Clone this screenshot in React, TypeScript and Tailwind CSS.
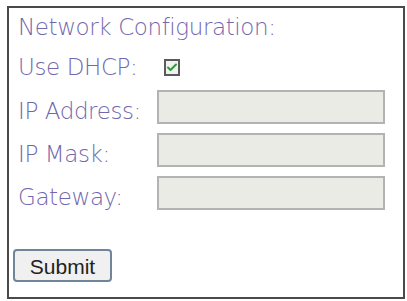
import { Check } from "lucide-react";

const FIELDS = ["IP Address:", "IP Mask:", "Gateway:"];

export default function App() {
  return (
    <div className="w-[407px] h-[301px] bg-white pt-[6px] pl-[7px] pr-[2px] pb-[2px]" style={{ fontFamily: '"DejaVu Sans", Verdana, sans-serif' }}>
      <div className="h-full border-2 border-[#4a4a4a] pl-[9px] pt-[5px] text-[#7267ae] text-[23px] font-light tracking-[-0.4px]">
        <div className="h-[28px] leading-[28px]">Network Configuration:</div>

        {/* DHCP */}
        <div className="flex items-center h-[36px] mt-[8px]">
          <span className="w-[146px] leading-[28px]">Use DHCP:</span>
          <span className="w-[16px] h-[17px] mt-[1px] border-2 border-[#5a5a5a] bg-[#eef3ee] flex items-center justify-center">
            <Check size={13} strokeWidth={4} className="text-[#2f9a3a]" />
          </span>
        </div>

        {/* address fields */}
        <div className="flex flex-col gap-[9px] mt-[5px]">
          {FIELDS.map((label) => (
            <div key={label} className="flex items-center h-[34px]">
              <span className="w-[139px] leading-[28px] mt-[8px]">{label}</span>
              <div className="w-[228px] h-[34px] border-2 border-[#b3b3b3] bg-[#ebebe6]" />
            </div>
          ))}
        </div>

        <button className="mt-[39px] -ml-[5px] w-[99px] h-[33px] border-2 border-[#70859a] rounded-[4px] bg-[#f0f0f0] text-[#222] text-[21px] tracking-normal" style={{ fontFamily: '"Liberation Sans", Arial, sans-serif' }}>
          Submit
        </button>
      </div>
    </div>
  );
}
